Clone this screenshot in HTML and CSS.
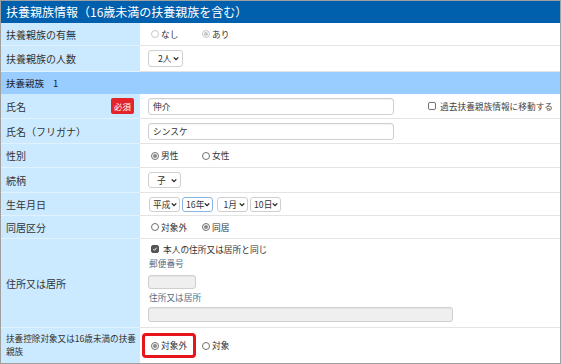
FILE: index.html
```html
<!DOCTYPE html>
<html lang="ja">
<head>
    <meta charset="UTF-8">
    <meta name="viewport" content="width=device-width, initial-scale=1.0">
    <title>扶養親族情報</title>
    <link rel="stylesheet" href="styles.css">
</head>
<body>
    <div class="form">
        <div class="title">扶養親族情報（16歳未満の扶養親族を含む）</div>

        <div class="row h23">
            <div class="label">扶養親族の有無</div>
            <div class="value">
                <span class="opt off"><span class="radio"></span>なし</span>
                <span class="opt off"><span class="radio on"></span>あり</span>
            </div>
        </div>

        <div class="row h26">
            <div class="label">扶養親族の人数</div>
            <div class="value">
                <span class="sel w35">2人<svg class="chev" viewBox="0 0 8 6"><path d="M1 1.5 4 4.5 7 1.5" /></svg></span>
            </div>
        </div>

        <div class="section">扶養親族<span class="num">1</span></div>

        <div class="row h25">
            <div class="label">氏名<span class="req">必須</span></div>
            <div class="value">
                <span class="text w246">伸介</span>
                <span class="move"><span class="check"></span>過去扶養親族情報に移動する</span>
            </div>
        </div>

        <div class="row h25">
            <div class="label">氏名（フリガナ）</div>
            <div class="value">
                <span class="text w246">シンスケ</span>
            </div>
        </div>

        <div class="row h24">
            <div class="label">性別</div>
            <div class="value">
                <span class="opt"><span class="radio on"></span>男性</span>
                <span class="opt"><span class="radio"></span>女性</span>
            </div>
        </div>

        <div class="row h25">
            <div class="label">続柄</div>
            <div class="value">
                <span class="sel w33">子<svg class="chev" viewBox="0 0 8 6"><path d="M1 1.5 4 4.5 7 1.5" /></svg></span>
            </div>
        </div>

        <div class="row h23">
            <div class="label">生年月日</div>
            <div class="value dates">
                <span class="sel small">平成<svg class="chev" viewBox="0 0 8 6"><path d="M1 1.5 4 4.5 7 1.5" /></svg></span>
                <span class="sel small focus">16年<svg class="chev" viewBox="0 0 8 6"><path d="M1 1.5 4 4.5 7 1.5" /></svg></span>
                <span class="sel small right">1月<svg class="chev" viewBox="0 0 8 6"><path d="M1 1.5 4 4.5 7 1.5" /></svg></span>
                <span class="sel small">10日<svg class="chev" viewBox="0 0 8 6"><path d="M1 1.5 4 4.5 7 1.5" /></svg></span>
            </div>
        </div>

        <div class="row h23">
            <div class="label">同居区分</div>
            <div class="value">
                <span class="opt"><span class="radio"></span>対象外</span>
                <span class="opt"><span class="radio on"></span>同居</span>
            </div>
        </div>

        <div class="row h89">
            <div class="label">住所又は居所</div>
            <div class="value address">
                <span class="same"><span class="check on"><svg viewBox="0 0 9 9"><path d="M2 4.6 3.8 6.4 7 2.6" /></svg></span>本人の住所又は居所と同じ</span>
                <span class="caption">郵便番号</span>
                <span class="text disabled zip"></span>
                <span class="caption">住所又は居所</span>
                <span class="text disabled addr"></span>
            </div>
        </div>

        <div class="row last">
            <div class="label wrap">扶養控除対象又は16歳未満の扶養<br>親族</div>
            <div class="value">
                <span class="opt marked"><span class="radio on"></span>対象外</span>
                <span class="opt"><span class="radio"></span>対象</span>
            </div>
        </div>
    </div>
</body>
</html>
```

FILE: styles.css
```css
body {
    margin: 0;
    font-family: "Noto Sans CJK JP", "Noto Sans", sans-serif;
    color: #333;
    background: #fff;
}
.form {
    width: 561px;
    height: 364px;
    box-sizing: border-box;
    border: 1px solid #a0a0a0;
    overflow: hidden;
}
.title {
    height: 22px;
    line-height: 22px;
    padding-left: 5px;
    background: #0060ad;
    color: #fff;
    font-size: 12px;
}
.row {
    display: grid;
    grid-template-columns: 139px 1fr;
    grid-template-rows: 100%;
    font-size: 8.7px;
}
.label {
    display: flex;
    align-items: center;
    justify-content: space-between;
    padding: 0 5px;
    background: #cceaff;
    border-bottom: 1px solid #e2f2fc;
    font-size: 10px;
    overflow: hidden;
}
.label.wrap {
    display: block;
    padding-top: 4px;
    line-height: 12.5px;
    font-size: 8.6px;
    white-space: nowrap;
}
.value {
    display: flex;
    align-items: center;
    padding-left: 8px;
    border-bottom: 1px solid #e4e4e4;
    white-space: nowrap;
}
.h23 { height: 23px; }
.h24 { height: 24px; }
.h25 { height: 25px; }
.h26 { height: 26px; }
.h89 { height: 89px; }
.row.last { height: 35px; }
.row.last .label,
.row.last .value { border-bottom: none; }

.section {
    height: 22px;
    line-height: 22px;
    padding-left: 5px;
    background: #99ccff;
    font-size: 9.5px;
    color: #222;
}
.num { margin-left: 9px; }
.req {
    background: #e3242b;
    color: #fff;
    font-size: 8.5px;
    line-height: 16px;
    padding: 0 3px;
    border-radius: 2px;
    margin-right: 1px;
}

/* radio / checkbox */
.opt {
    display: inline-flex;
    align-items: center;
    min-width: 51px;
}
.radio {
    width: 8px;
    height: 8px;
    box-sizing: border-box;
    border: 1px solid #707070;
    border-radius: 50%;
    margin: 0 2px 0 3px;
    background: #fff;
    display: inline-flex;
    align-items: center;
    justify-content: center;
}
.radio.on::after {
    content: "";
    width: 4px;
    height: 4px;
    border-radius: 50%;
    background: #8a8a8a;
}
.opt.off .radio { border-color: #c6c6c6; }
.opt.off .radio.on::after { background: #c6c6c6; }
.opt.marked {
    min-width: 0;
    border: 3px solid #e8141c;
    border-radius: 4px;
    margin-left: -6px;
    margin-right: 3px;
    padding: 3px 6px 3px 3px;
}
.check {
    width: 8px;
    height: 8px;
    box-sizing: border-box;
    border: 1px solid #707070;
    border-radius: 2px;
    margin: 0 4px 0 3px;
    background: #fff;
    display: inline-block;
}
.check.on {
    background: #555;
    border-color: #555;
}
.check svg {
    display: block;
    width: 6px;
    height: 6px;
}
.check path {
    fill: none;
    stroke: #fff;
    stroke-width: 1.5;
}
.move {
    display: inline-flex;
    align-items: center;
    margin-left: auto;
    margin-right: 7px;
    color: #444;
}

/* inputs */
.text {
    display: inline-block;
    box-sizing: border-box;
    height: 17px;
    line-height: 15px;
    padding-left: 4px;
    border: 1px solid #cfcfcf;
    border-radius: 3px;
    background: #fff;
    box-shadow: inset 0 1px 1px rgba(0, 0, 0, 0.05);
}
.text.disabled { background: #efefef; }
.w246 { width: 246px; }
.zip { width: 48px; height: 14px; margin-top: 5px; }
.addr { width: 305px; height: 15px; }

.sel {
    display: inline-flex;
    align-items: center;
    justify-content: space-between;
    box-sizing: border-box;
    height: 17px;
    padding: 0 3px 0 9px;
    border: 1px solid #cfcfcf;
    border-radius: 3px;
    background: #fff;
}
.w35 { width: 35px; }
.w33 { width: 33px; height: 16px; padding-left: 8px; }
.chev {
    width: 6px;
    height: 5px;
    flex: none;
}
.chev path {
    fill: none;
    stroke: #222;
    stroke-width: 1.8;
}
.dates { gap: 2px; padding-left: 9px; }
.sel.small {
    width: 31px;
    height: 15px;
    padding: 0 2px 0 3px;
}
.sel.small.focus { border-color: #8ab4e2; }
.sel.small.right { justify-content: flex-end; gap: 2px; margin-left: 2px; }

.address {
    flex-direction: column;
    align-items: flex-start;
    justify-content: flex-start;
    padding-top: 4px;
}
.same {
    display: inline-flex;
    align-items: center;
    height: 12px;
}
.caption {
    color: #4f6f8c;
    line-height: 12px;
    margin: 3px 0 0 1px;
}
.caption + .addr { margin-top: 3px; }
```
